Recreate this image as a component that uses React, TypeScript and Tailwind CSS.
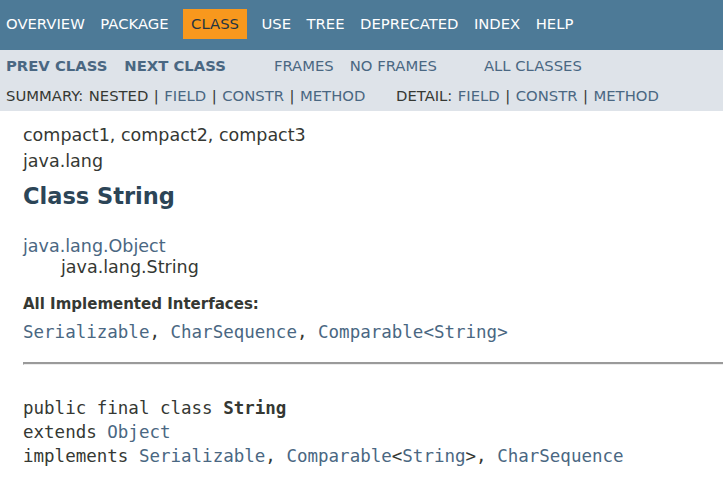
import React from "react";

const sans = { fontFamily: '"DejaVu Sans", Arial, sans-serif' };
const mono = { fontFamily: '"DejaVu Sans Mono", monospace' };

export default function App() {
  const topItems = ["OVERVIEW", "PACKAGE", "CLASS", "USE", "TREE", "DEPRECATED", "INDEX", "HELP"];
  return (
    <div className="w-[723px] h-[478px] overflow-hidden bg-white text-[#353833]" style={sans}>
      {/* top nav */}
      <div className="h-[50px] bg-[#4D7A97] flex items-start pt-[9px] pl-[6px] gap-[15.5px] text-[14.8px] text-white whitespace-nowrap">
        {topItems.map((t) =>
          t === "CLASS" ? (
            <span key={t} className="h-[30px] flex items-center px-[8.5px] -mx-[1.5px] bg-[#F8981D] text-[#253441]">
              {t}
            </span>
          ) : (
            <span key={t} className="h-[30px] flex items-center">
              {t}
            </span>
          )
        )}
      </div>
      {/* sub nav */}
      <div className="h-[61px] bg-[#DEE3E9] text-[14.8px] whitespace-nowrap">
        <div className="h-[32px] flex items-center pl-[6px] text-[#4A6782]">
          <span className="font-bold">PREV CLASS</span>
          <span className="font-bold ml-[17px]">NEXT CLASS</span>
          <span className="ml-[48px]">FRAMES</span>
          <span className="ml-[16px]">NO FRAMES</span>
          <span className="ml-[47px]">ALL CLASSES</span>
        </div>
        <div className="h-[29px] flex items-center pl-[6px] [word-spacing:0.8px]">
          <span className="w-[390px]">
            SUMMARY:&nbsp;NESTED&nbsp;|&nbsp;<span className="text-[#4A6782]">FIELD</span>&nbsp;|&nbsp;
            <span className="text-[#4A6782]">CONSTR</span>&nbsp;|&nbsp;<span className="text-[#4A6782]">METHOD</span>
          </span>
          <span>
            DETAIL:&nbsp;<span className="text-[#4A6782]">FIELD</span>&nbsp;|&nbsp;
            <span className="text-[#4A6782]">CONSTR</span>&nbsp;|&nbsp;<span className="text-[#4A6782]">METHOD</span>
          </span>
        </div>
      </div>
      {/* content */}
      <div className="pl-[23px] pt-[10.7px] whitespace-nowrap">
        <div className="text-[17.5px] leading-[26px]">compact1, compact2, compact3</div>
        <div className="text-[17.5px] leading-[26px]">java.lang</div>
        <h1 className="mt-[9px] text-[22.5px] leading-[27px] font-bold text-[#2C4557]">Class String</h1>
        <div className="mt-[26px] text-[17.5px] leading-[21px]">
          <div className="text-[#4A6782]">java.lang.Object</div>
          <div className="pl-[38px]">java.lang.String</div>
        </div>
        <div className="mt-[17.3px] text-[15px] leading-[18px] font-bold">All Implemented Interfaces:</div>
        <div className="mt-[7.2px] text-[17.5px] leading-[24px] text-[#4A6782]" style={mono}>
          Serializable<span className="text-[#353833]">, </span>CharSequence<span className="text-[#353833]">, </span>Comparable&lt;String&gt;
        </div>
        <div className="mt-[18px] h-[3px] border-t-2 border-t-[#9a9a9a] border-b border-b-[#ededed] border-l border-l-[#9a9a9a]" />
        <div className="mt-[31px] text-[17.5px] leading-[24px]" style={mono}>
          <div>
            public final class <span className="font-bold">String</span>
          </div>
          <div>
            extends <span className="text-[#4A6782]">Object</span>
          </div>
          <div>
            implements <span className="text-[#4A6782]">Serializable</span>, <span className="text-[#4A6782]">Comparable</span>&lt;<span className="text-[#4A6782]">String</span>&gt;, <span className="text-[#4A6782]">CharSequence</span>
          </div>
        </div>
      </div>
    </div>
  );
}
